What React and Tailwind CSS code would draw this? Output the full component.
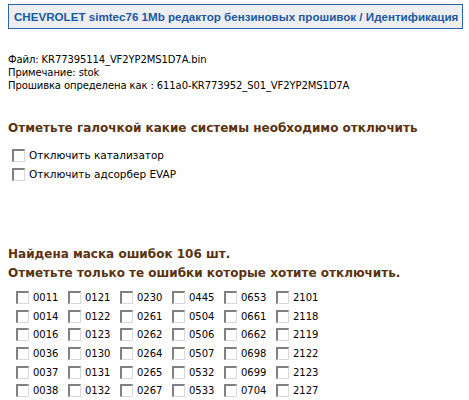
const codes = [
  ["0011", "0121", "0230", "0445", "0653", "2101"],
  ["0014", "0122", "0261", "0504", "0661", "2118"],
  ["0016", "0123", "0262", "0506", "0662", "2119"],
  ["0036", "0130", "0264", "0507", "0698", "2122"],
  ["0037", "0131", "0265", "0532", "0699", "2123"],
  ["0038", "0132", "0267", "0533", "0704", "2127"],
];

function Box() {
  return (
    <span className="inline-block w-[13px] h-[13px] shrink-0 bg-white border-t-2 border-l-2 border-t-[#808080] border-l-[#808080] border-b border-r border-b-[#d8d8d8] border-r-[#d8d8d8]" />
  );
}

function App() {
  return (
    <div className="w-[469px] h-[400px] bg-white overflow-hidden font-['DejaVu_Sans',sans-serif] text-[10px] text-black">
      <div className="mt-[4px] ml-[8px] mr-[6px] h-[25px] border border-[#2a66a8] bg-[#eceef2] flex items-center pl-[5px]">
        <span className="font-['Liberation_Sans',Arial,sans-serif] font-bold text-[11.6px] text-[#1b58a2] whitespace-nowrap">
          CHEVROLET simtec76 1Mb редактор бензиновых прошивок / Идентификация
        </span>
      </div>

      <div className="mt-[24px] ml-[8px] leading-[13px] tracking-[-0.1px]">
        <div>Файл: KR77395114_VF2YP2MS1D7A.bin</div>
        <div>Примечание: stok</div>
        <div>Прошивка определена как : 611a0-KR773952_S01_VF2YP2MS1D7A</div>
      </div>

      <div className="mt-[28px] ml-[8px] font-bold text-[12px] text-[#5a3210] leading-[16px]">
        Отметьте галочкой какие системы необходимо отключить
      </div>

      <div className="mt-[13px] ml-[12px] flex flex-col gap-[6px] text-[10.5px]">
        <label className="flex items-center gap-[4px] leading-[13px]">
          <Box />
          <span>Отключить катализатор</span>
        </label>
        <label className="flex items-center gap-[4px] leading-[13px]">
          <Box />
          <span>Отключить адсорбер EVAP</span>
        </label>
      </div>

      <div className="mt-[64px] ml-[8px] font-bold text-[12px] text-[#5a3210] leading-[19px]">
        <div>Найдена маска ошибок 106 шт.</div>
        <div>Отметьте только те ошибки которые хотите отключить.</div>
      </div>

      <div className="mt-[8px] ml-[16px] flex flex-col gap-[5.7px]">
        {codes.map((row, i) => (
          <div key={i} className="flex">
            {row.map((c) => (
              <label key={c} className="w-[52px] flex items-center gap-[4px] leading-[13px]">
                <Box />
                <span>{c}</span>
              </label>
            ))}
          </div>
        ))}
      </div>
    </div>
  );
}

export default App;
